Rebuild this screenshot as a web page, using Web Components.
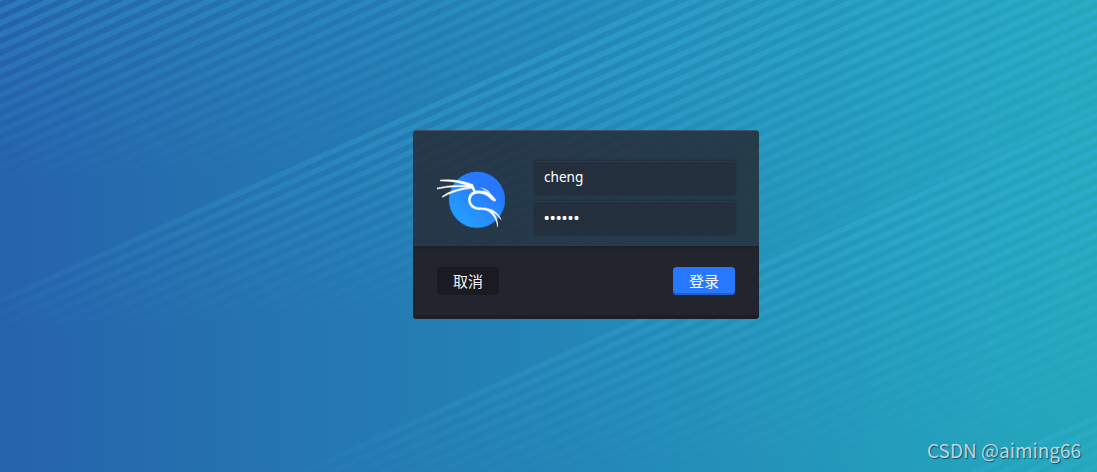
<!DOCTYPE html>
<html lang="zh-CN">
<head>
<meta charset="utf-8">
<title>登录</title>
<style>
body {
    margin: 0;
    font-family: "Noto Sans", "Noto Sans CJK SC", sans-serif;
}
</style>
</head>
<body>
<greeter-screen>
    <login-dialog>
        <user-avatar slot="avatar"></user-avatar>
        <text-entry slot="fields">cheng</text-entry>
        <text-entry slot="fields" secret>••••••</text-entry>
        <dialog-button slot="actions">取消</dialog-button>
        <dialog-button slot="actions" primary>登录</dialog-button>
    </login-dialog>
    <water-mark slot="mark">CSDN @aiming66</water-mark>
</greeter-screen>

<script>
class Screen extends HTMLElement {
    constructor(){
        super();
        this.shadow = this.attachShadow({mode:"open"});
    }

    connectedCallback() {
        this.render();
    }

    // Each band of stripes starts on its own diagonal and fades downwards
    static bands() {
        const groups = [
            {top:-3.8, end:298, fade:190, tilt:.06},
            {top:298, end:606, fade:338, tilt:.05},
            {top:606, end:908, fade:520, tilt:.06},
            {top:908, end:1220, fade:690, tilt:.08}
        ];
        const slope = .45;
        let out = "";
        groups.forEach((g, i) => {
            let d = "";
            for (let y = g.top; y < g.end - 3; y += 12) {
                d += `M0 ${y}L1100 ${y - slope * 1100}v6L0 ${y + 6}z`;
            }
            // gradient vector perpendicular to the fade line
            const len = 240;
            const x2 = g.tilt * g.fade / (1 + g.tilt * g.tilt);
            const y2 = g.fade / (1 + g.tilt * g.tilt);
            const k = 1 - len / g.fade;
            out += `
            <linearGradient id="f${i}" gradientUnits="userSpaceOnUse" x1="${x2 * k}" y1="${y2 * k}" x2="${x2}" y2="${y2}">
                <stop offset="0" stop-color="#38b2de" stop-opacity=".37"/>
                <stop offset="1" stop-color="#38b2de" stop-opacity="0"/>
            </linearGradient>
            <path d="${d}" fill="url(#f${i})"/>`;
        });
        return out;
    }

    render(){
        this.shadow.innerHTML = `
        <style>
        :host {
            display: block;
            box-sizing: border-box;
            width: 1097px;
            height: 472px;
            padding: 130px 0 0 413px;
            position: relative;
            overflow: hidden;
            background: linear-gradient(90deg, #2563ac 0, #2570af 200px, #247bb3 390px, #2389b8 620px, #2396ba 800px, #24a2bd 980px, #24a8bb 1097px);
        }
        svg {
            position: absolute;
            left: 0;
            top: 0;
        }
        ::slotted(login-dialog) {
            position: relative;
        }
        ::slotted(water-mark) {
            position: absolute;
            left: 927px;
            top: 438px;
        }
        </style>
        <svg width="1097" height="472" viewBox="0 0 1097 472">${Screen.bands()}</svg>
        <slot></slot>
        <slot name="mark"></slot>
        `
    }
}

class LoginDialog extends HTMLElement {
    constructor(){
        super();
        this.shadow = this.attachShadow({mode:"open"});
    }

    connectedCallback() {
        this.render();
    }

    render(){
        this.shadow.innerHTML = `
        <style>
        :host {
            display: flex;
            flex-direction: column;
            width: 346px;
            height: 189px;
            border-radius: 4px;
            overflow: hidden;
        }
        .content {
            display: flex;
            gap: 30px;
            box-sizing: border-box;
            height: 116px;
            padding: 31px 24px 0;
            background: rgba(38, 44, 54, .85);
            box-shadow: inset 0 1px rgba(255, 255, 255, .13);
        }
        .fields {
            display: flex;
            flex-direction: column;
            gap: 7px;
        }
        .actions {
            display: flex;
            justify-content: space-between;
            box-sizing: border-box;
            height: 73px;
            padding: 21px 24px 0;
            background: #23252e;
            box-shadow: inset 0 -4px #1c1e26, inset 0 2px 2px #1e2028;
        }
        </style>
        <div class="content">
            <slot name="avatar"></slot>
            <div class="fields"><slot name="fields"></slot></div>
        </div>
        <div class="actions"><slot name="actions"></slot></div>
        `
    }
}

class Avatar extends HTMLElement {
    constructor(){
        super();
        this.shadow = this.attachShadow({mode:"open"});
    }

    connectedCallback() {
        this.render();
    }

    render(){
        this.shadow.innerHTML = `
        <style>
        :host {
            display: block;
            width: 68px;
            padding-top: 10px;
        }
        svg {
            display: block;
        }
        </style>
        <svg width="68" height="60" viewBox="21 18 204 180">
            <defs>
                <linearGradient id="disc" x1=".2" y1=".9" x2=".7" y2=".25">
                    <stop offset="0" stop-color="#249fff"/>
                    <stop offset="1" stop-color="#2777ff"/>
                </linearGradient>
            </defs>
            <circle cx="141" cy="105" r="85" fill="#1c5faf"/>
            <circle cx="141" cy="104" r="83.500" fill="url(#disc)"/>
            <g fill="#fff" stroke="#fff" stroke-width="1.500">
                <path d="M31 45Q84 41 126 58L130 76L124 66Q82 47 31 48z"/>
                <path d="M21 69Q75 56 126 63L127 68Q75 61 21 72z"/>
                <path d="M37 94Q68 70 127 66L127 70Q78 74 37 97z"/>
                <path stroke="none" d="M148 67Q174 72 184 88Q169 75 148 67z"/>
                <path d="M160 77Q179 82 188 93L197 104L195 109L184 104Q172 88 150 85Q124 82 121 105Q123 125 145 128Q169 127 185 134Q206 144 213 164Q203 148 187 140Q204 158 203 186Q199 158 181 143Q169 132 145 134Q118 132 115 106Q115 86 132 79Q145 74 167 81z"/>
                <path d="M123 60L127 57L137 79L132 82z"/>
            </g>
        </svg>
        `
    }
}

class Entry extends HTMLElement {
    constructor(){
        super();
        this.shadow = this.attachShadow({mode:"open"});
    }

    connectedCallback() {
        this.render();
    }

    render(){
        this.shadow.innerHTML = `
        <style>
        :host {
            display: block;
            box-sizing: border-box;
            width: 200px;
            height: 33px;
            padding-left: 9px;
            border-radius: 3px;
            background: rgba(36, 39, 50, .52);
            box-shadow: 0 0 2px 1px rgba(24, 32, 42, .45), inset 0 1px rgba(255, 255, 255, .05);
            color: #fff;
            font-size: 13.6px;
            line-height: 32px;
        }
        :host([secret]) {
            padding-left: 8.5px;
            font-size: 17px;
            line-height: 33px;
            letter-spacing: -.45px;
        }
        </style>
        <slot></slot>
        `
    }
}

class DialogButton extends HTMLElement {
    constructor(){
        super();
        this.shadow = this.attachShadow({mode:"open"});
    }

    connectedCallback() {
        this.render();
    }

    render(){
        this.shadow.innerHTML = `
        <style>
        :host {
            display: block;
            width: 62px;
            height: 28px;
            border-radius: 4px;
            background: #191a22;
            color: #f2f2f2;
            font: 15px/27px "Noto Sans CJK SC", sans-serif;
            text-align: center;
        }
        :host([primary]) {
            background: #2777ff;
            box-shadow: inset 0 -2px #1f5fcc;
            color: #fff;
        }
        </style>
        <slot></slot>
        `
    }
}

class Watermark extends HTMLElement {
    constructor(){
        super();
        this.shadow = this.attachShadow({mode:"open"});
    }

    connectedCallback() {
        this.render();
    }

    render(){
        this.shadow.innerHTML = `
        <style>
        :host {
            display: block;
            font: 19px/24px "Noto Sans CJK SC", sans-serif;
            white-space: nowrap;
            color: #b9d6df;
            text-shadow: 1px 1px 1px rgba(20, 60, 80, .8);
        }
        </style>
        <slot></slot>
        `
    }
}

customElements.define('greeter-screen',Screen);
customElements.define('login-dialog',LoginDialog);
customElements.define('user-avatar',Avatar);
customElements.define('text-entry',Entry);
customElements.define('dialog-button',DialogButton);
customElements.define('water-mark',Watermark);
</script>
</body>
</html>
